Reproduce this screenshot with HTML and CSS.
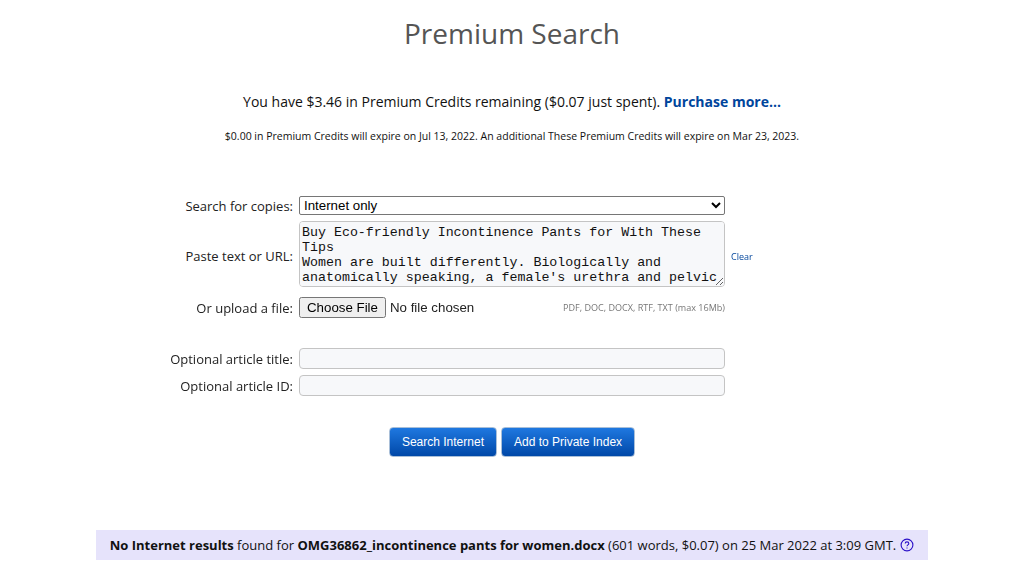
FILE: index.html
```html
<!DOCTYPE html>
<html lang="en">
<head>
  <meta charset="UTF-8" />
  <title>Premium Search</title>
  <link rel="stylesheet" href="styles.css">
</head>
<body>
<div class="container">
  <h1>Premium Search</h1>
  <p class="credits">You have $3.46 in Premium Credits remaining ($0.07 just spent). <a href="#">Purchase more...</a></p>
  <p class="expiry">$0.00 in Premium Credits will expire on Jul 13, 2022. An additional These Premium Credits will expire on Mar 23, 2023.</p>

  <form class="search-form">
    <div class="row row-select">
      <label for="copies">Search for copies:</label>
      <select id="copies">
        <option>Internet only</option>
      </select>
    </div>
    <div class="row row-text">
      <label for="text">Paste text or URL:</label>
      <textarea id="text" spellcheck="false">Buy Eco-friendly Incontinence Pants for With These Tips
Women are built differently. Biologically and anatomically speaking, a female's urethra and pelvic floor muscles are different.</textarea>
      <a class="clear" href="#">Clear</a>
    </div>
    <div class="row row-file">
      <label for="file">Or upload a file:</label>
      <div class="file-wrap">
        <input type="file" id="file">
        <span class="file-types">PDF, DOC, DOCX, RTF, TXT (max 16Mb)</span>
      </div>
    </div>
    <div class="row row-title">
      <label for="title">Optional article title:</label>
      <input type="text" id="title">
    </div>
    <div class="row row-id">
      <label for="articleid">Optional article ID:</label>
      <input type="text" id="articleid">
    </div>
    <div class="buttons">
      <button type="button">Search Internet</button>
      <button type="button">Add to Private Index</button>
    </div>
  </form>

  <div class="result">
    <span><b>No Internet results</b> found for <b>OMG36862_incontinence pants for women.docx</b> (601 words, $0.07) on 25 Mar 2022 at 3:09 GMT.</span>
    <svg class="help" width="14" height="14" viewBox="0 0 14 14" fill="none" stroke="#2a10c8">
      <circle cx="7" cy="7" r="5.9" stroke-width="1.1"/>
      <path d="M5.2 5.6c0-1 .8-1.7 1.8-1.7s1.8.7 1.8 1.6c0 1.3-1.8 1.4-1.8 2.7" stroke-width="1.1"/>
      <path d="M7 9.4v1" stroke-width="1.1"/>
    </svg>
  </div>
</div>
</body>
</html>
```

FILE: styles.css
```css
body {
  font-family: 'Open Sans', sans-serif;
  margin: 0;
  padding: 0 0 0 4px;
  background-color: #fff;
  color: #111;
  overflow: hidden;
}

.container {
  width: 1016px;
  height: 566px;
  display: flex;
  flex-direction: column;
  align-items: center;
}

h1 {
  font-size: 28px;
  font-weight: 400;
  line-height: 36px;
  color: #555;
  margin: 15px 0 0;
}

.credits {
  font-size: 14px;
  line-height: 20px;
  margin: 41px 0 0;
}

.credits a {
  color: #00459c;
  font-weight: 700;
  text-decoration: none;
}

.expiry {
  font-size: 10.5px;
  line-height: 14px;
  margin: 17px 0 0;
}

.search-form {
  width: 832px;
  margin-top: 53px;
}

.row {
  display: grid;
  grid-template-columns: 197px 426px 1fr;
  column-gap: 6px;
  align-items: center;
  font-size: 13px;
  color: #222;
}

.row label {
  text-align: right;
}

select {
  height: 19px;
  font-family: 'Liberation Sans', sans-serif;
  font-size: 13.3px;
  background: #fff;
  border: 1px solid #767676;
  border-radius: 2px;
  padding: 0;
  width: 100%;
}

textarea {
  box-sizing: border-box;
  width: 100%;
  height: 66px;
  margin: 0;
  padding: 3px 2px 2px;
  font-family: 'Liberation Mono', monospace;
  font-size: 13.3px;
  line-height: 15px;
  background: #f7f8fa;
  border: 1px solid #c4c4c4;
  border-radius: 4px;
  color: #111;
}

.row-text {
  margin-top: 6px;
}

.row-text label,
.clear {
  padding-top: 4px;
}

.clear {
  font-size: 9px;
  color: #00459c;
  text-decoration: none;
}

.row-file {
  margin-top: 10px;
}

.file-wrap {
  display: flex;
  justify-content: space-between;
  align-items: center;
}

input[type="file"] {
  font-family: 'Liberation Sans', sans-serif;
  font-size: 13.3px;
  width: 200px;
}

.file-types {
  font-size: 9.05px;
  color: #777;
}

input[type="text"] {
  box-sizing: border-box;
  width: 100%;
  height: 21px;
  margin: 0;
  background: #f7f8fa;
  border: 1px solid #c4c4c4;
  border-radius: 4px;
}

.row-title {
  margin-top: 30px;
}

.row-id {
  margin-top: 6px;
}

.buttons {
  display: flex;
  justify-content: center;
  gap: 4px;
  margin-top: 31px;
}

button {
  height: 30px;
  padding: 0 12px;
  font-family: 'Liberation Sans', sans-serif;
  font-size: 12px;
  color: #fff;
  background: linear-gradient(#1f78e0, #0048a8);
  border: 1px solid #a9bfd8;
  border-radius: 4px;
  cursor: pointer;
}

.result {
  box-sizing: border-box;
  width: 832px;
  height: 30px;
  margin-top: auto;
  margin-bottom: 6px;
  display: flex;
  align-items: center;
  justify-content: center;
  gap: 4px;
  font-size: 13px;
  color: #111;
  background: #e6e3fb;
}
```
